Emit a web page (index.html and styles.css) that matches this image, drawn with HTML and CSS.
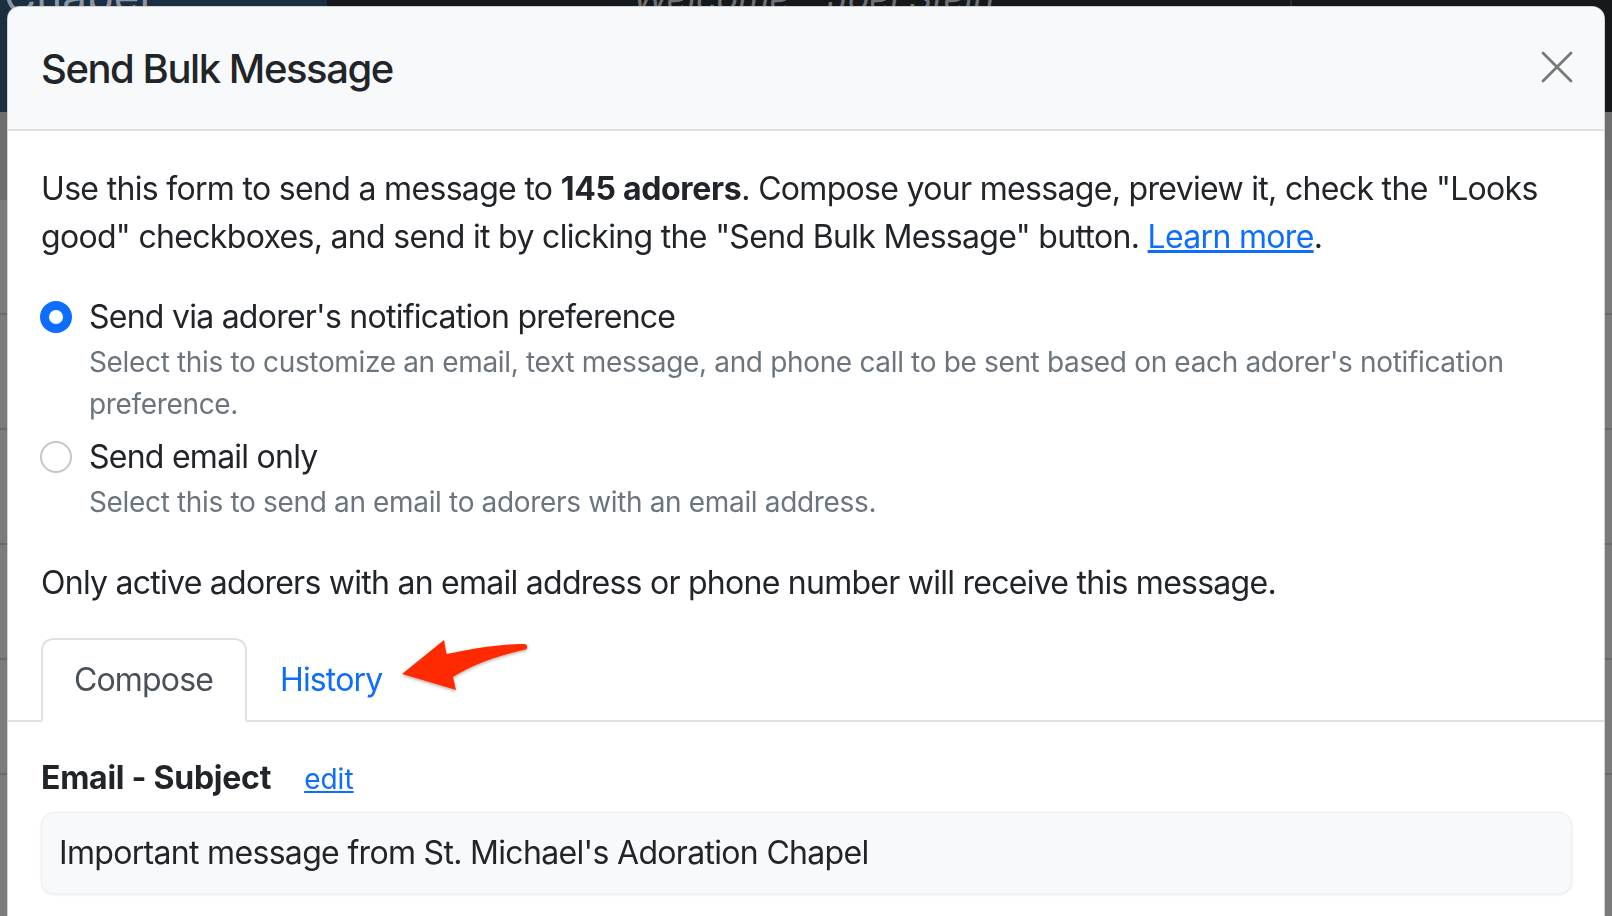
FILE: index.html
```html
<!DOCTYPE html>
<html lang="en">
<head>
<meta charset="utf-8">
<title>Send Bulk Message</title>
<link rel="stylesheet" href="styles.css">
</head>
<body>
<div class="page">
  <header class="navbar">
    <div class="brand">Chapel</div>
    <div class="welcome">Welcome - Joel Stein</div>
    <div class="nav-right"></div>
  </header>
  <div class="subbar"></div>
  <div class="page-rows">
    <div class="row"></div>
    <div class="row"></div>
    <div class="row"></div>
    <div class="row"></div>
    <div class="row"></div>
  </div>
</div>

<div class="modal">
  <div class="modal-header">
    <h5 class="modal-title">Send Bulk Message</h5>
    <button class="btn-close" type="button" aria-label="Close">
      <svg width="32" height="32" viewBox="0 0 32 32"><path d="M2 2 L30 30 M30 2 L2 30" stroke="#787878" stroke-width="2.8" stroke-linecap="round" fill="none"/></svg>
    </button>
  </div>
  <div class="modal-body">
    <p class="intro">Use this form to send a message to <strong>145 adorers</strong>. Compose your message, preview it, check the "Looks good" checkboxes, and send it by clicking the "Send Bulk Message" button. <a href="#">Learn more</a>.</p>

    <div class="form-check">
      <span class="radio checked"></span>
      <label class="check-label">Send via adorer's notification preference</label>
      <div class="form-text">Select this to customize an email, text message, and phone call to be sent based on each adorer's notification preference.</div>
    </div>
    <div class="form-check">
      <span class="radio"></span>
      <label class="check-label">Send email only</label>
      <div class="form-text">Select this to send an email to adorers with an email address.</div>
    </div>

    <p class="note">Only active adorers with an email address or phone number will receive this message.</p>

    <nav class="nav-tabs">
      <a class="tab active" href="#">Compose</a>
      <a class="tab" href="#">History</a>
      <svg class="callout-arrow" width="160" height="90" viewBox="0 0 160 90">
        <defs>
          <filter id="sh" x="-20%" y="-20%" width="140%" height="150%">
            <feDropShadow dx="0" dy="1.5" stdDeviation="1.5" flood-color="#000" flood-opacity="0.3"/>
          </filter>
        </defs>
        <path d="M22,54 L64,20 L66.5,34 C95,28 121,24 145,24 Q149,26 146,29.5 C116,36 92,45 73,57 L76,70 Z" fill="#ff2a00" filter="url(#sh)"/>
      </svg>
    </nav>

    <div class="field-head">
      <span class="field-label">Email - Subject</span>
      <a class="edit-link" href="#">edit</a>
    </div>
    <div class="field-box">Important message from St. Michael's Adoration Chapel</div>
  </div>
</div>
</body>
</html>
```

FILE: styles.css
```css
* { box-sizing: border-box; }

html, body {
  margin: 0;
  height: 100%;
}

body {
  font-family: Inter, "Noto Sans", "Liberation Sans", sans-serif;
  color: #212529;
  background: #7b7b7b;
  overflow: hidden;
}

/* dimmed page behind the modal */
.page {
  display: flex;
  flex-direction: column;
  height: 916px;
}

.navbar {
  height: 112px;
  display: flex;
  background: #16191c;
}

.brand {
  width: 327px;
  background: #1c2e42;
  color: #8b96a3;
  font-size: 44px;
  line-height: 1;
  margin-top: -26px;
  padding-left: 4px;
}

.welcome {
  flex: 1;
  text-align: center;
  color: #6f7378;
  font-size: 36px;
  font-style: italic;
  margin-top: -24px;
  border-right: 2px solid #2a2e33;
  padding-left: 90px;
  padding-right: 80px;
}

.nav-right {
  width: 320px;
}

.subbar {
  height: 88px;
  background: #6e6e6e;
}

.page-rows {
  display: flex;
  flex-direction: column;
}

.row {
  height: 115px;
  border-bottom: 2px solid #6a6a6a;
}

/* modal */
.modal {
  position: fixed;
  top: 6px;
  left: 7px;
  width: 1598px;
  height: 960px;
  background: #fff;
  border: 1px solid rgba(0, 0, 0, 0.18);
  border-radius: 13px 13px 0 0;
  overflow: hidden;
}

.modal-header {
  height: 124px;
  background: #f8f9fa;
  border-bottom: 2px solid #dee2e6;
  display: flex;
  align-items: center;
  justify-content: space-between;
  padding: 0 31px 0 33px;
}

.modal-title {
  margin: 0;
  font-size: 40px;
  font-weight: 500;
  line-height: 60px;
  letter-spacing: -0.036em;
  color: #212529;
  padding-top: 2px;
}

.btn-close {
  border: 0;
  background: transparent;
  padding: 0;
  width: 32px;
  height: 32px;
  display: flex;
  margin-top: -2px;
}

.modal-body {
  padding: 34px 31px 32px 33px;
  letter-spacing: -0.68px;
}

.intro {
  font-size: 32px;
  line-height: 48px;
  margin: 0 0 32px;
}

.intro strong {
  font-weight: 700;
  letter-spacing: -0.32px;
}

a {
  color: #0d6efd;
}

.form-check {
  display: grid;
  grid-template-columns: 48px 1fr;
  margin-bottom: 8px;
}

.radio {
  grid-row: 1;
  grid-column: 1;
  width: 32px;
  height: 32px;
  margin-top: 8px;
  margin-left: -1px;
  border-radius: 50%;
  border: 2px solid #c6c6c6;
  background: #fff;
  display: flex;
  align-items: center;
  justify-content: center;
}

.radio.checked {
  background: #0d6efd;
  border-color: #0d6efd;
}

.radio.checked::after {
  content: "";
  width: 14px;
  height: 14px;
  border-radius: 50%;
  background: #fff;
}

.check-label {
  grid-row: 1;
  grid-column: 2;
  font-size: 32px;
  line-height: 48px;
  letter-spacing: -0.75px;
}

.form-text {
  grid-row: 2;
  grid-column: 2;
  font-size: 28px;
  line-height: 42px;
  letter-spacing: -0.34px;
  color: #6c757d;
}

.note {
  font-size: 32px;
  line-height: 48px;
  margin: 36px 0 31px;
  letter-spacing: -0.74px;
}

.nav-tabs {
  position: relative;
  display: flex;
  margin: 0 -32px 0 -33px;
  padding-left: 33px;
  border-bottom: 2px solid #dee2e6;
}

.tab {
  font-size: 32px;
  line-height: 48px;
  padding: 16px 32px 16px 31px;
  border: 2px solid transparent;
  border-radius: 12px 12px 0 0;
  margin-bottom: -2px;
  text-decoration: none;
  letter-spacing: -0.85px;
  color: #0d6efd;
}

.tab.active {
  color: #495057;
  background: #fff;
  border-color: #dee2e6 #dee2e6 #fff;
}

.callout-arrow {
  position: absolute;
  left: 372px;
  top: -18px;
}

.field-head {
  margin-top: 32px;
  display: flex;
  align-items: baseline;
  gap: 33px;
  line-height: 48px;
}

.field-label {
  font-size: 32px;
  font-weight: 700;
  letter-spacing: -0.26px;
}

.edit-link {
  font-size: 28px;
  letter-spacing: 0;
}

.field-box {
  margin-top: 9px;
  width: 1531px;
  padding: 16px 17px;
  font-size: 32px;
  line-height: 48px;
  background: #f8f9fa;
  border: 1px solid #eef0f2;
  border-radius: 13px;
  box-shadow: 0 1px 3px rgba(0, 0, 0, 0.08);
}
```
